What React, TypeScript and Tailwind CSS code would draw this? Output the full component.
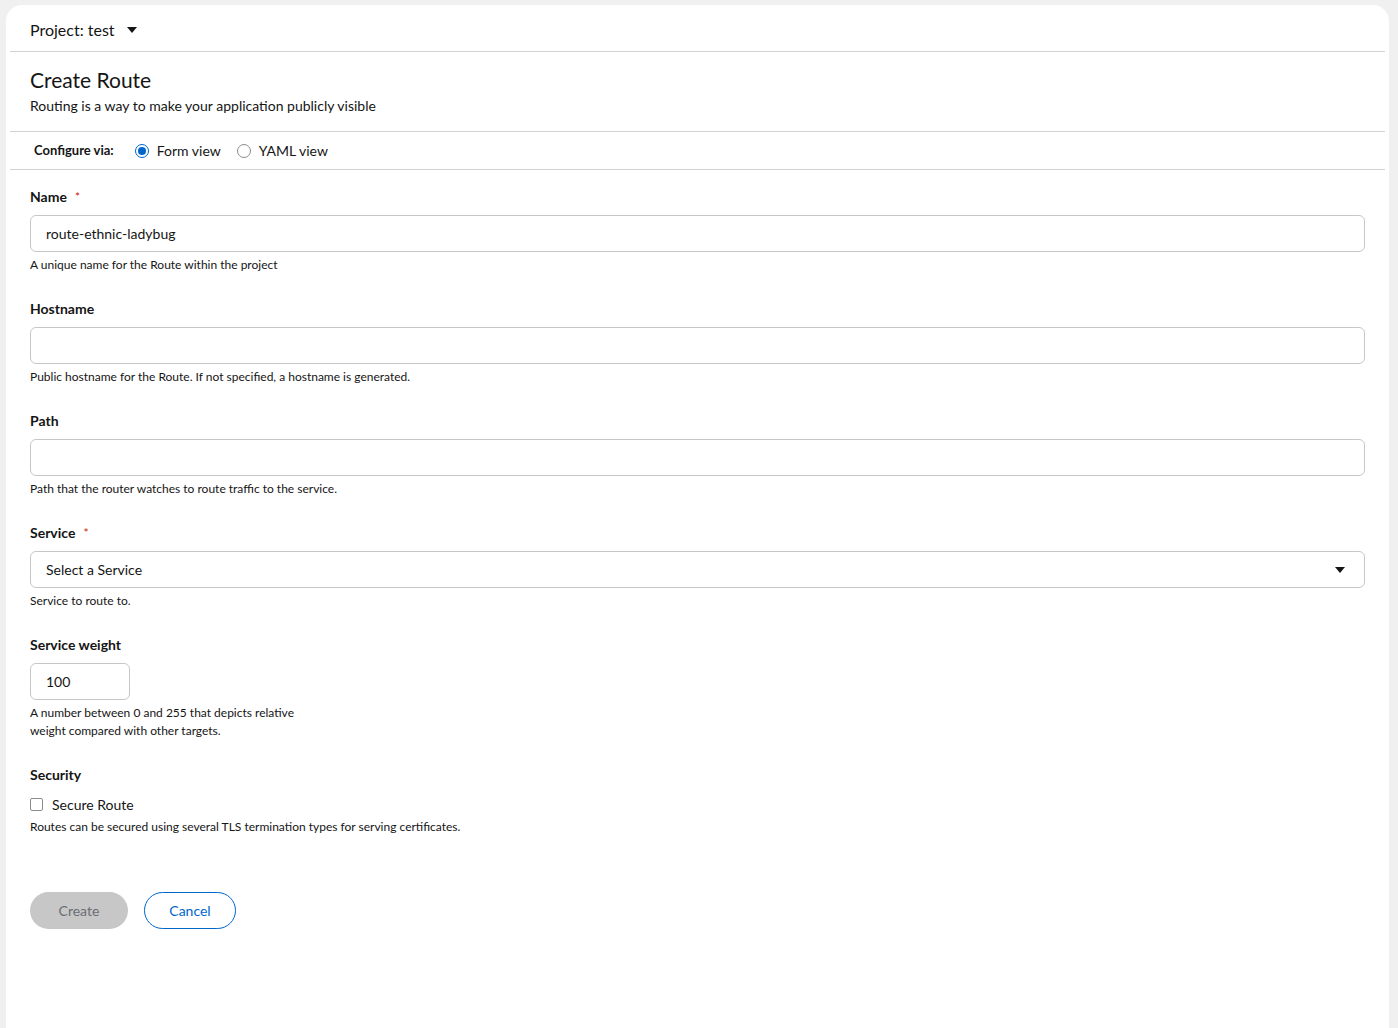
import React from 'react';

const font = { fontFamily: 'Lato, "Liberation Sans", sans-serif' };

const Field: React.FC<{
  label: string;
  required?: boolean;
  helper: React.ReactNode;
  children: React.ReactNode;
}> = ({ label, required, helper, children }) => (
  <div className="flex flex-col">
    <div className="flex items-center leading-[24px] text-[14px] font-bold text-[#151515]">
      {label}
      {required && <span className="ml-[8px] text-[#c9190b] font-normal text-[12px]">*</span>}
    </div>
    <div className="mt-[6px]">{children}</div>
    <div className="mt-[4px] text-[12px] leading-[18px] text-[#151515]">{helper}</div>
  </div>
);

const inputCls =
  'h-[37px] rounded-[6px] border border-[#c7c7c7] bg-white px-[15px] text-[14px] text-[#151515] outline-none';

export default function App() {
  return (
    <div className="min-h-screen bg-[#f0f0f0] pl-[6px] pr-[9px] pt-[5px]" style={font}>
      <div className="min-h-[1023px] rounded-t-[16px] bg-white px-[4px] text-[#151515]">
        {/* Header */}
        <div className="flex h-[47px] items-center gap-[11px] border-b border-[#d2d2d2] px-[20px] pt-[4px]">
          <span className="text-[16px]">Project: test</span>
          <svg width="10" height="6" viewBox="0 0 10 6" className="ml-[1px]">
            <path d="M0 0h10L5 6z" fill="#151515" />
          </svg>
        </div>

        {/* Title */}
        <div className="border-b border-[#d2d2d2] px-[20px] pt-[13px] pb-[15px]">
          <h1 className="text-[21px] leading-[30px]">Create Route</h1>
          <p className="text-[14px] leading-[21px]">Routing is a way to make your application publicly visible</p>
        </div>

        {/* Configure via */}
        <div className="flex h-[38px] items-center border-b border-[#d2d2d2] px-[24px] text-[14px]">
          <span className="font-bold text-[13px]">Configure via:</span>
          <label className="ml-[21px] flex items-center gap-[8px]">
            <span className="flex h-[14px] w-[14px] items-center justify-center rounded-full border border-[#0066cc]">
              <span className="h-[8px] w-[8px] rounded-full bg-[#0066cc]" />
            </span>
            Form view
          </label>
          <label className="ml-[16px] flex items-center gap-[8px]">
            <span className="h-[14px] w-[14px] rounded-full border border-[#8a8d90]" />
            YAML view
          </label>
        </div>

        {/* Form */}
        <div className="flex flex-col gap-[23px] px-[20px] pt-[15px]">
          <Field label="Name" required helper="A unique name for the Route within the project">
            <div className={`${inputCls} flex w-full items-center`}>route-ethnic-ladybug</div>
          </Field>
          <Field label="Hostname" helper="Public hostname for the Route. If not specified, a hostname is generated.">
            <div className={`${inputCls} w-full`} />
          </Field>
          <Field label="Path" helper="Path that the router watches to route traffic to the service.">
            <div className={`${inputCls} w-full`} />
          </Field>
          <Field label="Service" required helper="Service to route to.">
            <div className={`${inputCls} flex w-full items-center justify-between pr-[19px]`}>
              <span>Select a Service</span>
              <svg width="10" height="6" viewBox="0 0 10 6">
                <path d="M0 0h10L5 6z" fill="#151515" />
              </svg>
            </div>
          </Field>
          <Field
            label="Service weight"
            helper={
              <>
                A number between 0 and 255 that depicts relative
                <br />
                weight compared with other targets.
              </>
            }
          >
            <div className={`${inputCls} flex w-[100px] items-center`}>100</div>
          </Field>

          <div className="flex flex-col">
            <div className="text-[14px] font-bold leading-[24px]">Security</div>
            <label className="mt-[8px] flex h-[18px] items-center gap-[9px] text-[14px]">
              <span className="h-[13px] w-[13px] rounded-[2px] border border-[#8a8d90]" />
              Secure Route
            </label>
            <div className="mt-[5px] text-[12px] leading-[18px]">
              Routes can be secured using several TLS termination types for serving certificates.
            </div>
          </div>

          <div className="mt-[33px] flex gap-[16px]">
            <button className="h-[37px] w-[98px] rounded-full bg-[#c7c7c7] text-[14px] text-[#6a6e73]">Create</button>
            <button className="h-[37px] w-[92px] rounded-full border border-[#0066cc] text-[14px] text-[#0066cc]">
              Cancel
            </button>
          </div>
        </div>
      </div>
    </div>
  );
}
